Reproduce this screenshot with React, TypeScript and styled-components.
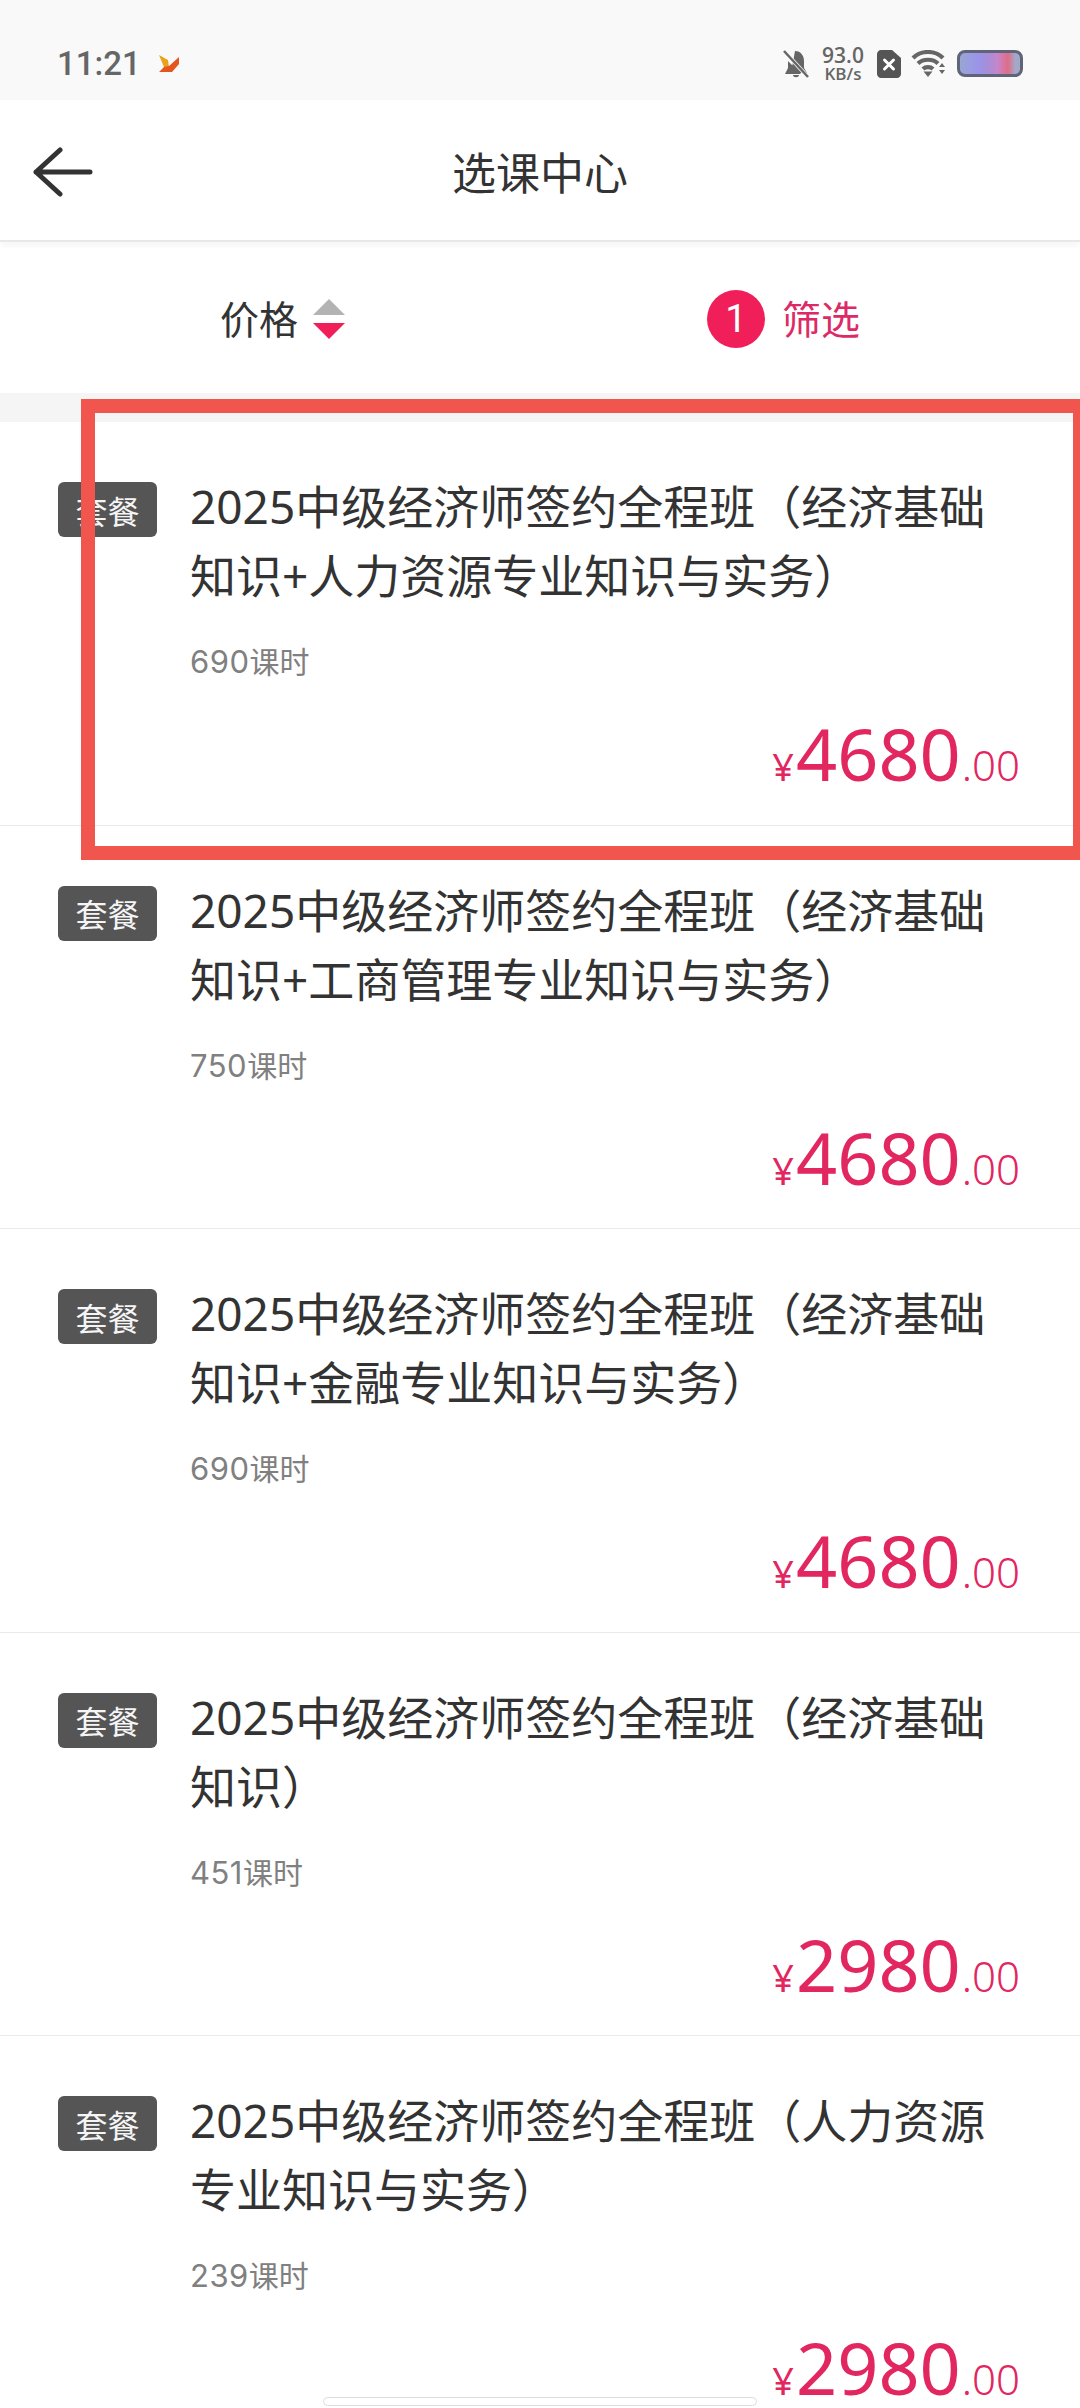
import React, { FC } from "react";
import styled, { createGlobalStyle } from "styled-components";

const GlobalStyle = createGlobalStyle`
  html, body {
    margin: 0;
    padding: 0;
    background: #fff;
    font-family: "Noto Sans", "Noto Sans CJK SC", sans-serif;
  }
`;

const Page = styled.div`
  position: relative;
  width: 1080px;
  height: 2408px;
  overflow: hidden;
  background: #fff;
`;

const StatusBar = styled.div`
  display: flex;
  align-items: center;
  justify-content: space-between;
  height: 100px;
  padding: 27px 57px 0 57px;
  box-sizing: border-box;
  background: #f9f9f9;
  color: #666;
`;

const StatusLeft = styled.div`
  display: flex;
  align-items: center;
  gap: 17px;
`;

const Clock = styled.span`
  font-family: Roboto, sans-serif;
  font-size: 33px;
  font-weight: 500;
  line-height: 40px;
`;

const StatusRight = styled.div`
  display: flex;
  align-items: center;
`;

const Speed = styled.div`
  display: flex;
  flex-direction: column;
  align-items: center;
  width: 46px;
  margin: 0 11px;
  font-family: "Open Sans", sans-serif;
  font-weight: 600;
`;

const SpeedValue = styled.span`
  display: block;
  height: 20px;
  font-size: 21px;
  line-height: 20px;
`;

const SpeedUnit = styled.span`
  display: block;
  height: 18px;
  font-size: 17px;
  line-height: 18px;
`;

const Battery = styled.div`
  width: 66px;
  height: 27px;
  margin-left: 11px;
  box-sizing: border-box;
  border: 3px solid #5f6478;
  border-radius: 8px;
  background: linear-gradient(
    90deg,
    #9aa6d2 0%,
    #9a94ea 30%,
    #a58ed8 45%,
    #c486cc 62%,
    #e06c86 80%,
    #a3a8c8 92%
  );
`;

const Header = styled.header`
  position: relative;
  display: flex;
  align-items: center;
  justify-content: center;
  height: 142px;
  padding-top: 5px;
  box-sizing: border-box;
  border-bottom: 2px solid #e8e8e8;
  box-shadow: 0 6px 4px -1px #f8f8f8;
`;

const BackIcon = styled.svg`
  position: absolute;
  left: 33px;
  top: 47px;
`;

const HeaderTitle = styled.h1`
  margin: 0;
  font-size: 44px;
  font-weight: 400;
  line-height: 60px;
  color: #333;
`;

const FilterBar = styled.div`
  display: flex;
  align-items: center;
  justify-content: space-between;
  height: 143px;
  margin-top: 8px;
  padding: 0 220px 6px;
  box-sizing: border-box;
`;

const FilterItem = styled.div`
  display: flex;
  align-items: center;
`;

const FilterLabel = styled.span<{ $active?: boolean }>`
  font-size: 39px;
  line-height: 50px;
  color: ${(p) => (p.$active ? "#dc2a67" : "#333")};
`;

const Sorter = styled.div`
  display: flex;
  flex-direction: column;
  gap: 8px;
  margin-left: 15px;
`;

const Triangle = styled.div<{ $down?: boolean }>`
  width: 0;
  height: 0;
  border-left: 16px solid transparent;
  border-right: 16px solid transparent;
  border-${(p) => (p.$down ? "top" : "bottom")}: 16px solid
    ${(p) => (p.$down ? "#f01f5a" : "#b3b3b3")};
`;

const CountBadge = styled.span`
  display: flex;
  align-items: center;
  justify-content: center;
  width: 58px;
  height: 58px;
  margin-right: 17px;
  border-radius: 50%;
  background: #f01f5a;
  color: #fff;
  font-family: Roboto, sans-serif;
  font-size: 38px;
`;

const Gap = styled.div`
  height: 29px;
  background: #f5f5f6;
`;

const Row = styled.div`
  display: flex;
  height: 403.5px;
  box-sizing: border-box;
  padding: 50px 60px 0 58px;
  border-bottom: 1.5px solid #e9e9e9;
`;

const Tag = styled.span`
  flex: none;
  display: flex;
  align-items: center;
  justify-content: center;
  width: 99px;
  height: 55px;
  margin: 10px 33px 0 0;
  border-radius: 6px;
  background: #555;
  color: #f5f5f5;
  font-size: 32px;
`;

const Content = styled.div`
  flex: 1;
  display: flex;
  flex-direction: column;
`;

const Title = styled.div`
  width: 815px;
  font-size: 46px;
  line-height: 69px;
  color: #333;
`;

const Hours = styled.div`
  margin-top: 32px;
  font-size: 30px;
  line-height: 40px;
  color: #808080;
`;

const HoursNum = styled.span`
  font-family: Inter, sans-serif;
  font-size: 31px;
  letter-spacing: 0.5px;
`;

const Price = styled.div`
  display: flex;
  align-items: baseline;
  justify-content: flex-end;
  margin-top: 33px;
  height: 74px;
  line-height: 76px;
  color: #e2265f;
`;

const Currency = styled.span`
  font-size: 38px;
  margin-right: 2px;
`;

const Amount = styled.span`
  font-size: 72px;
`;

const Cents = styled.span`
  font-size: 42px;
  font-weight: 300;
  margin-left: 1px;
`;

const Highlight = styled.div`
  position: absolute;
  left: 81px;
  top: 399px;
  width: 1006px;
  height: 461px;
  box-sizing: border-box;
  border: 14px solid #f0554e;
`;

const HomeBar = styled.div`
  position: absolute;
  left: 323px;
  top: 2397px;
  width: 434px;
  height: 9px;
  box-sizing: border-box;
  border: 1px solid #ddd;
  border-radius: 5px;
  background: #fff;
`;

const courses = [
  { name: "2025中级经济师签约全程班（经济基础知识+人力资源专业知识与实务）", hours: 690, price: 4680 },
  { name: "2025中级经济师签约全程班（经济基础知识+工商管理专业知识与实务）", hours: 750, price: 4680 },
  { name: "2025中级经济师签约全程班（经济基础知识+金融专业知识与实务）", hours: 690, price: 4680 },
  { name: "2025中级经济师签约全程班（经济基础知识）", hours: 451, price: 2980 },
  { name: "2025中级经济师签约全程班（人力资源专业知识与实务）", hours: 239, price: 2980 },
];

const App: FC = () => {
  return (
    <Page>
      <GlobalStyle />
      <StatusBar>
        <StatusLeft>
          <Clock>11:21</Clock>
          <svg width="22" height="19" viewBox="0 0 22 19">
            <path d="M1 1 L10 6 L11 13 L6 13 Z" fill="#e8a21c" />
            <path d="M21 3 L21 10 L14 18 L1 18 L6 13 L11 12 Z" fill="#e4551f" />
          </svg>
        </StatusLeft>
        <StatusRight>
          <svg width="26" height="28" viewBox="0 0 26 28">
            <path d="M12 1 C18 1 21 6 21 11 L21 18 L24 23 L8 23 Z M3 9 L18 24 L2 24 L5 18 L5 11 Z M10 25 L16 25 C16 28 10 28 10 25 Z" fill="#666" />
            <path d="M1 1 L25 27" stroke="#f9f9f9" strokeWidth="4" />
            <path d="M1 1 L25 27" stroke="#666" strokeWidth="2.5" />
          </svg>
          <Speed>
            <SpeedValue>93.0</SpeedValue>
            <SpeedUnit>KB/s</SpeedUnit>
          </Speed>
          <svg width="24" height="28" viewBox="0 0 24 28">
            <path d="M4 0 L15 0 L24 8 L24 24 C24 26 22 28 20 28 L4 28 C2 28 0 26 0 24 L0 4 C0 2 2 0 4 0 Z" fill="#555" />
            <path d="M7.5 10 L16.5 19 M16.5 10 L7.5 19" stroke="#fff" strokeWidth="3" strokeLinecap="round" />
          </svg>
          <svg width="35" height="27" viewBox="0 0 35 27" style={{ marginLeft: 10 }}>
            <path d="M2 8 C10 0 24 0 32 8" fill="none" stroke="#666" strokeWidth="4.2" />
            <path d="M7 13.5 C12 8.5 22 8.5 27 13.5" fill="none" stroke="#666" strokeWidth="4.2" />
            <path d="M12 19 C14.5 16.5 19.5 16.5 22 19" fill="none" stroke="#666" strokeWidth="4.2" />
            <path d="M12.5 21.5 L21.5 21.5 L17 27 Z" fill="#666" />
            <path d="M28 17 L31 13 L34 17 Z M28 20 L34 20 L31 24 Z" fill="#666" />
          </svg>
          <Battery />
        </StatusRight>
      </StatusBar>
      <Header>
        <BackIcon width="60" height="50" viewBox="0 0 60 50">
          <path
            d="M27 3 L3 25 L27 47 M3 25 L57 25"
            fill="none"
            stroke="#333"
            strokeWidth="5"
            strokeLinecap="round"
            strokeLinejoin="round"
          />
        </BackIcon>
        <HeaderTitle>选课中心</HeaderTitle>
      </Header>
      <FilterBar>
        <FilterItem>
          <FilterLabel>价格</FilterLabel>
          <Sorter>
            <Triangle />
            <Triangle $down />
          </Sorter>
        </FilterItem>
        <FilterItem>
          <CountBadge>1</CountBadge>
          <FilterLabel $active>筛选</FilterLabel>
        </FilterItem>
      </FilterBar>
      <Gap />
      {courses.map((course, i) => (
        <Row key={i}>
          <Tag>套餐</Tag>
          <Content>
            <Title>{course.name}</Title>
            <Hours>
              <HoursNum>{course.hours}</HoursNum>课时
            </Hours>
            <Price>
              <Currency>¥</Currency>
              <Amount>{course.price}</Amount>
              <Cents>.00</Cents>
            </Price>
          </Content>
        </Row>
      ))}
      <Highlight />
      <HomeBar />
    </Page>
  );
};

export default App;
